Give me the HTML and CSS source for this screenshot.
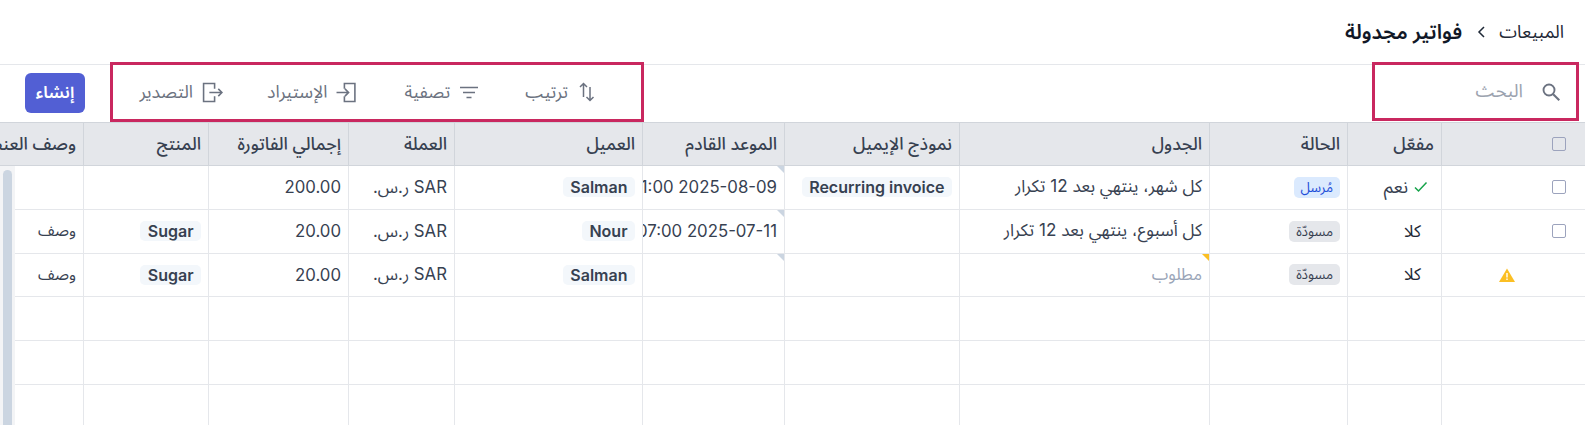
FILE: index.html
```html
<!DOCTYPE html>
<html lang="ar" dir="rtl">
<head>
<meta charset="utf-8">
<title>فواتير مجدولة</title>
<link rel="stylesheet" href="styles.css">
</head>
<body>
<header class="crumbs">
  <span class="crumb">المبيعات</span>
  <svg class="chev" width="16" height="16" viewBox="0 0 16 16"><path d="M11 3 6 8l5 5" fill="none" stroke="#1f2937" stroke-width="1.500"/></svg>
  <h1 class="title">فواتير مجدولة</h1>
</header>
<div class="toolbar">
  <div class="search">
    <svg width="22" height="22" viewBox="0 0 20 20"><circle cx="8.200" cy="8.200" r="5" fill="none" stroke="#6b7280" stroke-width="1.700"/><path d="m12 12 5.500 5.500" stroke="#6b7280" stroke-width="1.900" fill="none"/></svg>
    <span class="placeholder">البحث</span>
  </div>
  <div class="actions">
    <span class="action sort">
      <svg width="20" height="20" viewBox="0 0 20 20"><path d="M6.500 15V1.500M3 5l3.500-3.500L10 5M13 5v13.500M9.500 15l3.500 3.500 3.500-3.500" fill="none" stroke="#6b7280" stroke-width="1.500"/></svg>
      ترتيب
    </span>
    <span class="action filter">
      <svg width="20" height="20" viewBox="0 0 20 20"><path d="M1 5.500h18M4 10.500h12M7.500 15.500h5" fill="none" stroke="#6b7280" stroke-width="1.700"/></svg>
      تصفية
    </span>
    <span class="action import">
      <svg width="21" height="21" viewBox="0 0 20 20"><path d="M8 6.500v-5h10v17H8v-5M0.500 10h11.500M8.500 6.500 12 10l-3.500 3.500" fill="none" stroke="#6b7280" stroke-width="1.500"/></svg>
      الإستيراد
    </span>
    <span class="action export">
      <svg width="21" height="21" viewBox="0 0 20 20"><path d="M12 6.500v-5H1.500v17H12v-5M7 10h12M15.500 6.500 19 10l-3.500 3.500" fill="none" stroke="#6b7280" stroke-width="1.500"/></svg>
      التصدير
    </span>
  </div>
  <button class="create">إنشاء</button>
</div>
<main class="sheet">
  <div class="row head">
    <div class="cell"><span class="box"></span></div>
    <div class="cell">مفعّل</div>
    <div class="cell">الحالة</div>
    <div class="cell">الجدول</div>
    <div class="cell">نموذج الإيميل</div>
    <div class="cell">الموعد القادم</div>
    <div class="cell">العميل</div>
    <div class="cell">العملة</div>
    <div class="cell">إجمالي الفاتورة</div>
    <div class="cell">المنتج</div>
    <div class="cell">وصف العنصر</div>
  </div>
  <div class="row">
    <div class="cell"><span class="box"></span></div>
    <div class="cell"><span class="yes"><svg width="14" height="14" viewBox="0 0 14 14"><path d="m1 7.500 3.500 3.500 8-8.500" fill="none" stroke="#16a34a" stroke-width="1.500"/></svg>نعم</span></div>
    <div class="cell"><span class="badge sent">مُرسل</span></div>
    <div class="cell sched">كل شهر، ينتهي بعد 12 تكرار</div>
    <div class="cell"><span class="chip">Recurring invoice</span></div>
    <div class="cell note">2025-08-09 11:00</div>
    <div class="cell"><span class="chip">Salman</span></div>
    <div class="cell">SAR ر.س.</div>
    <div class="cell">200.00</div>
    <div class="cell"></div>
    <div class="cell"></div>
  </div>
  <div class="row">
    <div class="cell"><span class="box"></span></div>
    <div class="cell"><span class="no">كلا</span></div>
    <div class="cell"><span class="badge draft">مسودّة</span></div>
    <div class="cell sched">كل أسبوع، ينتهي بعد 12 تكرار</div>
    <div class="cell"></div>
    <div class="cell note">2025-07-11 07:00</div>
    <div class="cell"><span class="chip">Nour</span></div>
    <div class="cell">SAR ر.س.</div>
    <div class="cell">20.00</div>
    <div class="cell"><span class="chip">Sugar</span></div>
    <div class="cell desc">وصف</div>
  </div>
  <div class="row">
    <div class="cell warn"><svg width="16" height="14" viewBox="0 0 16 14"><path d="M8 .5 16 14H0Z" fill="#fbbf24"/><path d="M7.300 5h1.400v4.500H7.300zM7.300 10.500h1.400V12H7.300z" fill="#fff"/></svg></div>
    <div class="cell"><span class="no">كلا</span></div>
    <div class="cell"><span class="badge draft">مسودّة</span></div>
    <div class="cell required">مطلوب</div>
    <div class="cell"></div>
    <div class="cell note"></div>
    <div class="cell"><span class="chip">Salman</span></div>
    <div class="cell">SAR ر.س.</div>
    <div class="cell">20.00</div>
    <div class="cell"><span class="chip">Sugar</span></div>
    <div class="cell desc">وصف</div>
  </div>
  <div class="row"><div class="cell"></div><div class="cell"></div><div class="cell"></div><div class="cell"></div><div class="cell"></div><div class="cell"></div><div class="cell"></div><div class="cell"></div><div class="cell"></div><div class="cell"></div><div class="cell"></div></div>
  <div class="row"><div class="cell"></div><div class="cell"></div><div class="cell"></div><div class="cell"></div><div class="cell"></div><div class="cell"></div><div class="cell"></div><div class="cell"></div><div class="cell"></div><div class="cell"></div><div class="cell"></div></div>
  <div class="row"><div class="cell"></div><div class="cell"></div><div class="cell"></div><div class="cell"></div><div class="cell"></div><div class="cell"></div><div class="cell"></div><div class="cell"></div><div class="cell"></div><div class="cell"></div><div class="cell"></div></div>
  <div class="track"><div class="thumb"></div></div>
</main>
</body>
</html>
```
FILE: styles.css
```css
* { box-sizing: border-box; }
html, body { height: 100%; }
body {
  margin: 0;
  overflow: hidden;
  background: #fff;
  color: #1f2937;
  font-family: "Inter", "Noto Sans Arabic", "Noto Sans", "DejaVu Sans", sans-serif;
  font-size: 14px;
}
.crumbs {
  height: 64px;
  display: flex;
  align-items: center;
  gap: 10px;
  padding: 0 21px 0 0;
}
.crumb { font-size: 18px; color: #1f2937; }
.title { margin: 0 1px 0 0; font-size: 20.500px; font-weight: 600; color: #111827; }
.toolbar {
  height: 58px;
  border-top: 1px solid #e5e7eb;
  display: flex;
  align-items: flex-start;
  padding-right: 6px;
}
.search {
  width: 207px;
  height: 59px;
  margin-top: -3px;
  border: 3px solid #c9285f;
  display: flex;
  align-items: center;
  gap: 17px;
  padding-right: 14px;
  color: #9ca3af;
  font-size: 18.500px;
}
.actions {
  width: 534px;
  height: 60px;
  margin-top: -3px;
  margin-right: 728px;
  border: 3px solid #c9285f;
  display: flex;
  align-items: center;
  padding-right: 44px;
  color: #6b7280;
  font-size: 17.600px;
}
.action { display: flex; align-items: center; gap: 9px; white-space: nowrap; }
.filter { margin-right: 46px; }
.import { margin-right: 47px; }
.export { margin-right: 44px; }
.create {
  width: 60px;
  height: 40px;
  margin: 8px 25px 0 0;
  border: 0;
  border-radius: 6px;
  background: #525fd4;
  color: #fff;
  font: inherit;
  font-size: 17px;
  font-weight: 600;
  padding: 0;
}
.sheet { position: relative; overflow: hidden; height: 303px; }
.row {
  display: grid;
  grid-template-columns: 144px 94px 138px 250px 175px 142px 188px 106px 140px 125px 84px;
  height: 43.800px;
  width: 1586px;
}
.head {
  height: 44px;
  background: #e5e7eb;
  border-top: 1px solid #d1d5db;
  color: #374151;
}
.head .cell { border-left-color: #d1d5db; border-bottom-color: #d1d5db; font-size: 17.500px; font-weight: 500; }
.cell {
  position: relative;
  display: flex;
  align-items: center;
  padding: 0 7px;
  overflow: hidden;
  border-left: 1px solid #e5e7eb;
  border-bottom: 1px solid #e5e7eb;
  white-space: nowrap;
  min-width: 0;
  color: #374151;
  font-size: 16.800px;
}
.sched { font-size: 17.100px; }
.desc { font-size: 15.500px; }
.box {
  width: 14px;
  height: 14px;
  margin-right: 12px;
  border: 1.500px solid #9ca3bd;
  border-radius: 2px;
}
.yes { display: inline-flex; align-items: center; gap: 6px; margin-right: 6px; font-size: 18px; }
.no { margin-right: 13px; color: #1f2937; }
.badge {
  display: inline-block;
  height: 21px;
  line-height: 20px;
  padding: 0 7px;
  border-radius: 5px;
  font-size: 13.500px;
}
.sent { background: #dbeafe; color: #1d4ed8; }
.draft { background: #e5e7eb; color: #374151; }
.chip {
  height: 20px;
  line-height: 20px;
  padding: 0 7.500px;
  border-radius: 5px;
  background: #f3f7fb;
  font-size: 16px;
  font-weight: 600;
  color: #374151;
}
.required { color: #9aa5b8; }
.note::after, .required::after {
  content: "";
  position: absolute;
  top: 0;
  right: 0;
  width: 0;
  height: 0;
  border-style: solid;
  border-width: 7px 0 0 7px;
  border-color: #cbd5e1 transparent transparent transparent;
}
.required::after { border-color: #fbbf24 transparent transparent transparent; }
.warn { padding-right: 70px; }
.track {
  position: absolute;
  left: 0;
  top: 44px;
  bottom: 0;
  width: 15px;
  background: #f3f4f6;
  padding: 4px 3px 0;
}
.thumb { height: 100%; width: 9px; border-radius: 5px 5px 0 0; background: #cbd5e1; }
```
